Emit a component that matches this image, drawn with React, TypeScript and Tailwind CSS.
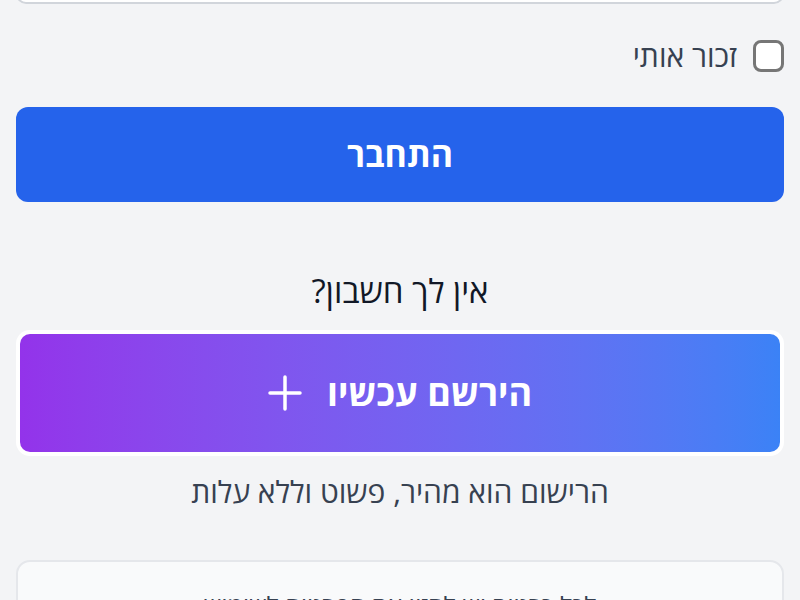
import { useState } from "react";

function PlusIcon() {
  return (
    <svg width="34" height="36" viewBox="0 0 34 36" fill="none" stroke="currentColor" strokeWidth="3.5" strokeLinecap="round">
      <path d="M2 18h30" />
      <path d="M17 2v32" />
    </svg>
  );
}

export default function App() {
  const [remember, setRemember] = useState(false);

  return (
    <div
      dir="rtl"
      className="h-[600px] overflow-hidden bg-[#f3f4f6] px-4 font-['Open_Sans','Noto_Sans','DejaVu_Sans',sans-serif]"
    >
      {/* password field, scrolled mostly out of view */}
      <input
        type="password"
        className="-mt-[56px] block h-[60px] w-full rounded-[10px] border-2 border-[#d1d5db] bg-white"
      />

      <label className="mt-[36px] flex items-center gap-4">
        <input
          type="checkbox"
          checked={remember}
          onChange={(e) => setRemember(e.target.checked)}
          className="h-[32px] w-[31px] appearance-none rounded-[8px] border-[3px] border-[#767676] bg-white"
        />
        <span className="text-[30px] leading-[32px] text-[#374151]">זכור אותי</span>
      </label>

      <button
        type="submit"
        className="mt-[35px] flex h-[95px] w-full items-center justify-center rounded-[12px] bg-[#2563eb] text-[34px] font-bold text-white"
      >
        התחבר
      </button>

      <p className="mt-[69px] text-center text-[33px] font-medium leading-[40px] text-[#111827]">
        אין לך חשבון?
      </p>

      <div className="mt-[19px] rounded-[14px] bg-white p-[4px]">
        <button
          type="button"
          className="flex h-[118px] w-full items-center justify-center gap-[25px] rounded-[10px] bg-gradient-to-r from-[#9333ea] to-[#3b82f6] text-[36px] font-bold text-white"
        >
          <span>הירשם עכשיו</span>
          <PlusIcon />
        </button>
      </div>

      <p className="mt-[18px] text-center text-[30px] leading-[36px] text-[#374151]">
        הרישום הוא מהיר, פשוט וללא עלות
      </p>

      <div className="mt-[50px] rounded-[14px] border-2 border-[#e5e7eb] bg-[#f9fafb] px-6 pt-[26px] pb-6">
        <p className="text-center text-[25px] leading-[34px] text-[#374151]">
          לכל כרטיס יש להזין את הפרטים לשימוש
        </p>
      </div>
    </div>
  );
}
